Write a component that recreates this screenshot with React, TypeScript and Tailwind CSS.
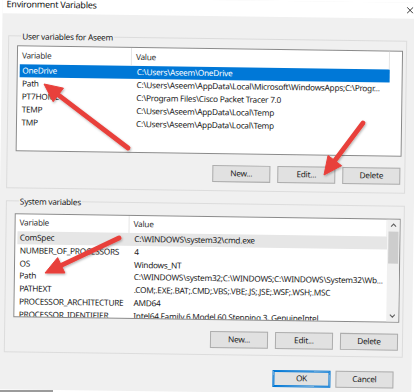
const userVars = [
  ['OneDrive', 'C:\\Users\\Aseem\\OneDrive'],
  ['Path', 'C:\\Users\\Aseem\\AppData\\Local\\Microsoft\\WindowsApps;C:\\Progr...'],
  ['PT7HOME', 'C:\\Program Files\\Cisco Packet Tracer 7.0'],
  ['TEMP', 'C:\\Users\\Aseem\\AppData\\Local\\Temp'],
  ['TMP', 'C:\\Users\\Aseem\\AppData\\Local\\Temp'],
]

const systemVars = [
  ['ComSpec', 'C:\\WINDOWS\\system32\\cmd.exe'],
  ['NUMBER_OF_PROCESSORS', '4'],
  ['OS', 'Windows_NT'],
  ['Path', 'C:\\WINDOWS\\system32;C:\\WINDOWS;C:\\WINDOWS\\System32\\Wb...'],
  ['PATHEXT', '.COM;.EXE;.BAT;.CMD;.VBS;.VBE;.JS;.JSE;.WSF;.WSH;.MSC'],
  ['PROCESSOR_ARCHITECTURE', 'AMD64'],
  ['PROCESSOR_IDENTIFIER', 'Intel64 Family 6 Model 60 Stepping 3, GenuineIntel'],
]

function Btn({ label }: { label: string }) {
  return (
    <button className="w-[58px] h-[17px] border border-[#adadad] bg-[#e1e1e1] text-[8.25px] leading-none text-[#222]">
      {label}
    </button>
  )
}

function ButtonRow() {
  // New / Edit / Delete under each list
  return (
    <div className="flex justify-end gap-[7px] mr-[1px] mt-[11px]">
      <Btn label="New..." />
      <Btn label="Edit..." />
      <Btn label="Delete" />
    </div>
  )
}

function Header({ h }: { h: string }) {
  return (
    <div className={`flex ml-[2px] text-[#333] ${h}`}>
      <div className="w-[112px] pl-[2px] flex items-center border-r border-[#e5e5e5]">Variable</div>
      <div className="w-[258px] pl-[4px] flex items-center border-r border-[#e5e5e5]">Value</div>
    </div>
  )
}

function Row({ name, value, tone, h }: { name: string; value: string; tone: 'sel' | 'dim' | 'none'; h: string }) {
  const bg = tone === 'sel' ? 'bg-[#0078d7] text-white' : tone === 'dim' ? 'bg-[#e6e6e6] text-[#1a1a1a]' : 'text-[#1a1a1a]'
  return (
    <div className={`flex ml-[2px] w-[370px] items-center whitespace-nowrap ${h} ${bg}`}>
      <div className="w-[112px] pl-[2.5px] overflow-hidden">{name}</div>
      <div className="w-[258px] pl-[5px] overflow-hidden">{value}</div>
    </div>
  )
}

function GroupLabel({ text }: { text: string }) {
  return (
    <div className="-mt-[6px] ml-[4px] w-fit px-[1px] bg-[#f0f0f0] h-[11px] leading-[11px] text-[#222]">
      {text}
    </div>
  )
}

function Arrow({ x1, y1, x2, y2 }: { x1: number; y1: number; x2: number; y2: number }) {
  const dx = x2 - x1
  const dy = y2 - y1
  const len = Math.hypot(dx, dy)
  const ux = dx / len
  const uy = dy / len
  const hl = 18
  const hw = 8.5
  const bx = x2 - ux * hl
  const by = y2 - uy * hl
  const pts = `${x2},${y2} ${bx - uy * hw},${by + ux * hw} ${bx + uy * hw},${by - ux * hw}`
  return (
    <g filter="url(#sh)">
      <line x1={x1} y1={y1} x2={bx + ux * 3} y2={by + uy * 3} stroke="#e8403b" strokeWidth={4.8} strokeLinecap="round" />
      <polygon points={pts} fill="#e8403b" stroke="#e8403b" strokeWidth={1} strokeLinejoin="round" />
    </g>
  )
}

export default function App() {
  return (
    <div className="relative w-[414px] h-[392px] overflow-hidden bg-white font-['Noto_Sans',sans-serif] text-[8.25px] tracking-[-0.25px]">
      {/* the screenshot is slightly tilted */}
      <div className="w-[414px] h-[392px] rotate-[0.8deg] bg-[#f0f0f0] flex flex-col">
        {/* Title bar */}
        <div className="h-[16px] bg-white flex items-start justify-between pl-[4px] pr-[3px]">
          <span className="pt-[1px] text-[9px] leading-[11px] text-[#111]">Environment Variables</span>
          <svg className="w-[7px] h-[7px] mt-[3.5px]" viewBox="0 0 7 7">
            <path d="M0.5 0.5L6.5 6.5M6.5 0.5L0.5 6.5" stroke="#222" strokeWidth="0.9" />
          </svg>
        </div>

        <div className="pl-[6px] pr-[9px]">
          {/* User variables */}
          <div className="mt-[22px] border border-[#dcdcdc] pl-[8px] pr-[3px] pb-[8px]">
            <GroupLabel text="User variables for Aseem" />
            <div className="mt-[4px] h-[106px] border border-[#8a8a8a] bg-white overflow-hidden">
              <Header h="h-[18px]" />
              {userVars.map(([n, v], i) => (
                <Row key={n} name={n} value={v} tone={i === 0 ? 'sel' : 'none'} h="h-[13px]" />
              ))}
            </div>
            <ButtonRow />
          </div>

          {/* System variables */}
          <div className="mt-[12px] border border-[#dcdcdc] pl-[8px] pr-[3px] pb-[6px]">
            <GroupLabel text="System variables" />
            <div className="mt-[7px] h-[104px] border border-[#8a8a8a] bg-white flex overflow-hidden">
              <div className="flex-1 overflow-hidden">
                <Header h="h-[17px]" />
                {systemVars.map(([n, v], i) => (
                  <Row key={n} name={n} value={v} tone={i === 0 ? 'dim' : 'none'} h="h-[12.75px]" />
                ))}
              </div>
              <div className="w-[12px] bg-[#f0f0f0] flex flex-col items-center">
                <svg className="w-[12px] h-[12px]" viewBox="0 0 12 12">
                  <path d="M3.5 7L6 4.5L8.5 7" fill="none" stroke="#606060" strokeWidth="1.1" />
                </svg>
                <div className="w-[10px] h-[32px] bg-[#cdcdcd]" />
                <div className="flex-1" />
                <svg className="w-[12px] h-[12px]" viewBox="0 0 12 12">
                  <path d="M3.5 5L6 7.5L8.5 5" fill="none" stroke="#606060" strokeWidth="1.1" />
                </svg>
              </div>
            </div>
            <ButtonRow />
          </div>
        </div>

        {/* OK / Cancel */}
        <div className="flex justify-end gap-[5px] pr-[18px] mt-[14px]">
          <button className="w-[58px] h-[17px] border border-[#0078d7] ring-1 ring-inset ring-[#0078d7] bg-[#e1e1e1] text-[8.25px] leading-none text-[#222]">
            OK
          </button>
          <button className="w-[58px] h-[17px] border border-[#adadad] bg-[#e1e1e1] text-[8.25px] leading-none text-[#222]">
            Cancel
          </button>
        </div>
      </div>

      <div className="absolute left-0 bottom-0 w-[53px] h-[2px] bg-[#9b9b9b]" />

      <svg className="absolute inset-0 pointer-events-none" width="414" height="392" viewBox="0 0 414 392">
        <defs>
          <filter id="sh" x="-20%" y="-20%" width="140%" height="140%">
            <feDropShadow dx="0.8" dy="1.2" stdDeviation="1" floodColor="#000" floodOpacity="0.3" />
          </filter>
        </defs>
        <Arrow x1={128} y1={148} x2={44} y2={84} />
        <Arrow x1={363} y1={123} x2={324} y2={175} />
        <Arrow x1={119} y1={238} x2={45} y2={273} />
      </svg>
    </div>
  )
}
